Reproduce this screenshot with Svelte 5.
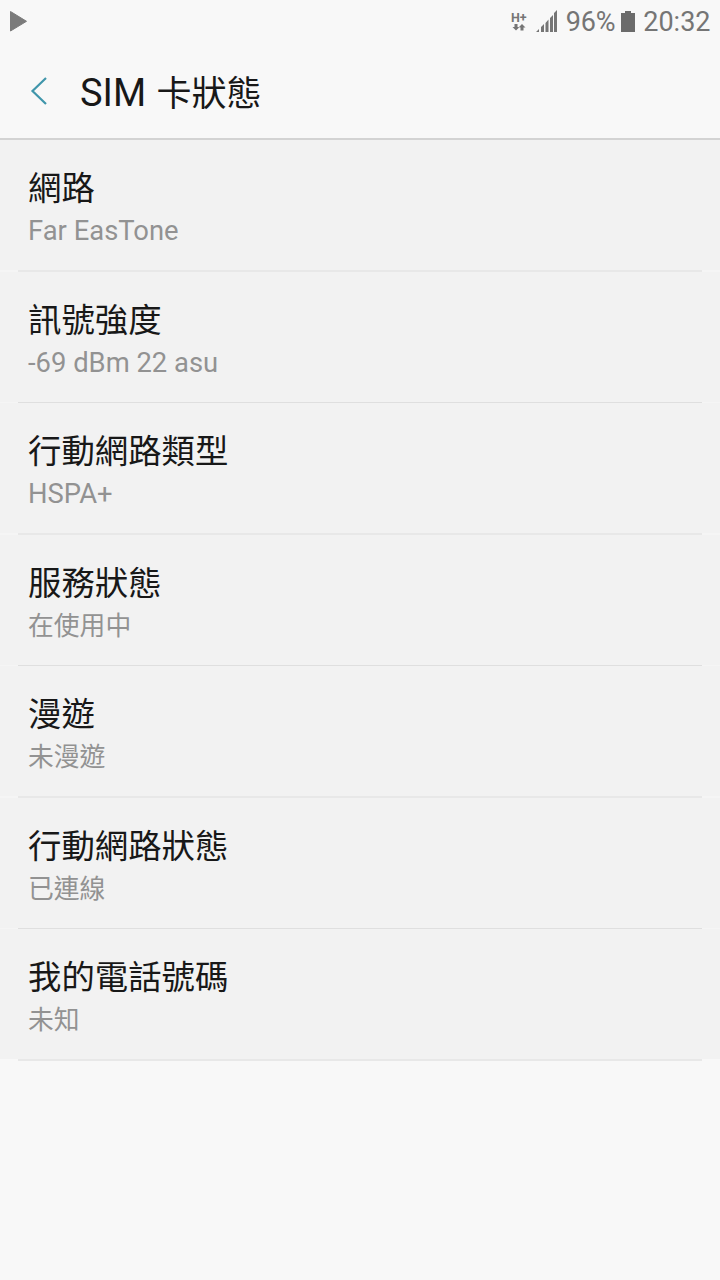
<script lang="ts">
  /** SIM 卡狀態項目 */
  const items = [
    { title: '網路', value: 'Far EasTone' },
    { title: '訊號強度', value: '-69 dBm 22 asu' },
    { title: '行動網路類型', value: 'HSPA+' },
    { title: '服務狀態', value: '在使用中', cjk: true },
    { title: '漫遊', value: '未漫遊', cjk: true },
    { title: '行動網路狀態', value: '已連線', cjk: true },
    { title: '我的電話號碼', value: '未知', cjk: true }
  ];
</script>

<div class="screen">
  <div class="status-bar">
    <svg width="20" height="24" viewBox="0 0 20 24">
      <path
        d="M2.5 1.500 L18.500 11.300 L2.500 21 Z"
        fill="#7b7b7b"
        stroke="#7b7b7b"
        stroke-linejoin="round"
      />
    </svg>
    <div class="status-bar__right">
      <div class="network">
        <span>H+</span>
        <svg width="14" height="7" viewBox="0 0 14 7">
          <path d="M2.500 0h3v3h2L4 6.500L.5 3h2zM8.500 6.500h3V3.500h2L10 0L6.500 3.500h2z" fill="#757575" />
        </svg>
      </div>
      <!-- 斜頂的訊號格 -->
      <svg class="signal" width="22" height="22" viewBox="0 0 22 22">
        <path
          d="M0 22 L3 19 V22zM5 22V17L8 14V22zM9.500 22V13L12.500 9.500V22zM14 22V8L17 5V22zM18 22V3L21 0V22z"
          fill="#757575"
        />
      </svg>
      <span class="percent">96%</span>
      <svg class="battery" width="14" height="21" viewBox="0 0 14 21">
        <path d="M4 0h6v2h4v19H0V2h4z" fill="#6b6b6b" />
      </svg>
      <span class="time">20:32</span>
    </div>
  </div>

  <header class="header">
    <button type="button" class="header__back" aria-label="返回">
      <svg width="18" height="30" viewBox="0 0 18 30">
        <path d="M16 2 L2.500 15 L16 28" fill="none" stroke="#4096ab" stroke-width="2.2" />
      </svg>
    </button>
    <h1>SIM <span>卡狀態</span></h1>
  </header>

  <ul class="list">
    {#each items as item}
      <li class="item">
        <div class="item__title">{item.title}</div>
        <div class="item__value" class:item__value--cjk={item.cjk}>{item.value}</div>
      </li>
    {/each}
  </ul>
</div>

<style>
  :global(body) {
    margin: 0;
    background: #f8f8f8;
  }

  .screen {
    min-height: 1280px;
    font-family: Roboto, 'Noto Sans CJK TC', sans-serif;
    color: #181818;
    background: #f8f8f8;
  }

  .status-bar {
    display: flex;
    align-items: center;
    justify-content: space-between;
    box-sizing: border-box;
    height: 44px;
    padding: 0 9.5px 0 8px;
    color: #757575;
    font-size: 27px;
    line-height: 44px;
  }

  .status-bar__right {
    display: flex;
    align-items: center;
  }

  .network {
    display: flex;
    flex-direction: column;
    align-items: center;
    width: 16px;
    margin: 0 9px 2px 0;
    font-size: 12.5px;
    font-weight: 700;
    line-height: 13px;
  }

  .signal {
    margin: 0 8px 2px 0;
  }

  .battery {
    margin: 0 8.5px 2px 5.5px;
  }

  .percent {
    letter-spacing: -0.2px;
  }

  .header {
    display: flex;
    align-items: center;
    box-sizing: border-box;
    height: 96px;
    padding: 0 30px;
    border-bottom: 2px solid #d3d3d3;
  }

  .header__back {
    display: flex;
    width: 50px;
    padding: 0;
    border: none;
    background: none;
  }

  h1 {
    margin: 6px 0 0;
    font-size: 38px;
    font-weight: 400;
    line-height: 48px;

    span {
      margin-left: 1px;
      font-size: 35px;
    }
  }

  .list {
    margin: 0;
    padding: 0;
    list-style: none;
    background: #f2f2f2;
  }

  /* 分隔線兩側各留 18px 的淺色 */
  .item {
    --line: #dfdfdf;
    --edge: #f5f5f5;
    box-sizing: border-box;
    height: 131px;
    padding: 26px 28px 0;
    background: linear-gradient(
        to right,
        var(--edge) 18px,
        var(--line) 18px,
        var(--line) calc(100% - 18px),
        var(--edge) calc(100% - 18px)
      )
      bottom / 100% 1px no-repeat;
  }

  .item:nth-child(odd) {
    --line: #e8e8e8;
    height: 132px;
    background-size: 100% 2px;
  }

  .item:last-child {
    --edge: #f8f8f8;
  }

  .item__title {
    font-size: 33.4px;
    line-height: 46px;
  }

  .item__value {
    color: #929292;
    font-size: 27.4px;
    line-height: 38px;
  }

  .item__value--cjk {
    font-size: 25.8px;
  }
</style>
